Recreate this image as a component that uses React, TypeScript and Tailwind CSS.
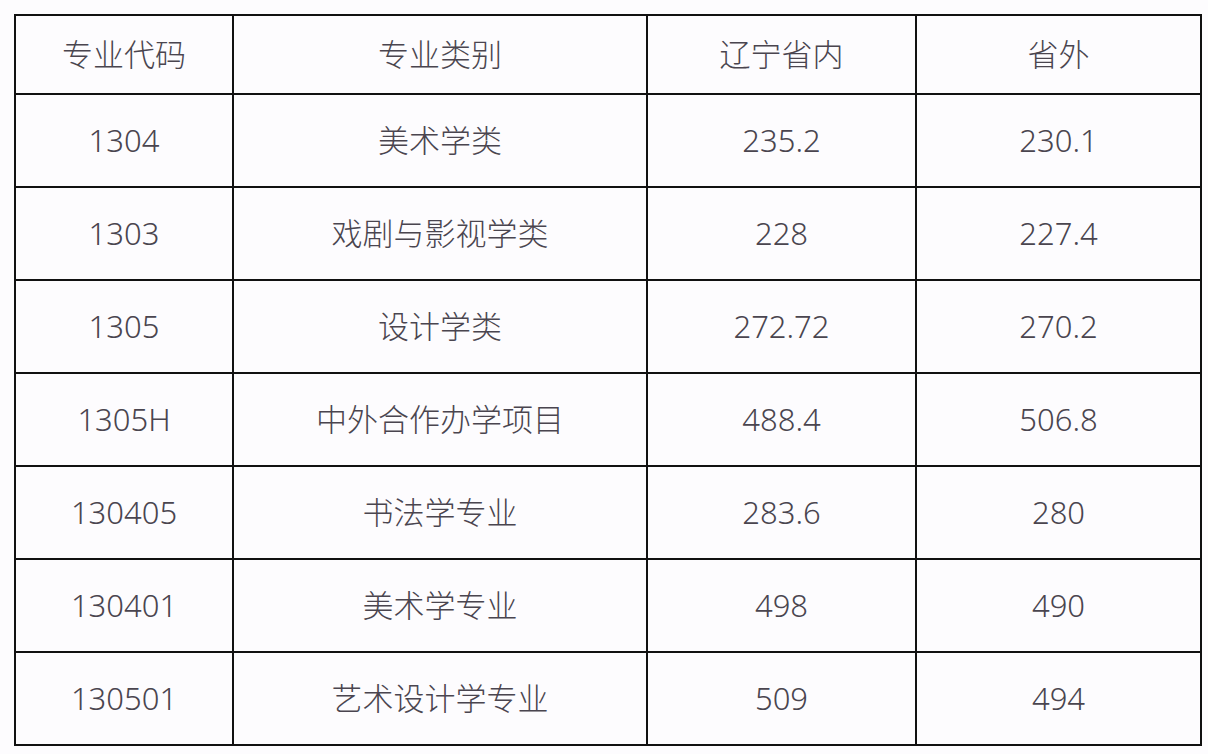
const rows = [
  ["1304", "美术学类", "235.2", "230.1"],
  ["1303", "戏剧与影视学类", "228", "227.4"],
  ["1305", "设计学类", "272.72", "270.2"],
  ["1305H", "中外合作办学项目", "488.4", "506.8"],
  ["130405", "书法学专业", "283.6", "280"],
  ["130401", "美术学专业", "498", "490"],
  ["130501", "艺术设计学专业", "509", "494"],
];

const cell = "border-2 border-[#111] text-center align-middle font-light";

export default function App() {
  return (
    <div
      className="w-[1208px] h-[754px] bg-[#fdfcfe] pt-[14px] pl-[14px] text-[31px] text-[#4a454f]"
      style={{ fontFamily: '"Noto Sans", "Noto Sans CJK SC", sans-serif' }}
    >
      <table className="border-collapse table-fixed w-[1186px]">
        <colgroup>
          <col className="w-[218px]" />
          <col className="w-[414px]" />
          <col className="w-[269px]" />
          <col className="w-[285px]" />
        </colgroup>
        <thead>
          <tr className="h-[79px]">
            <th className={cell}>专业代码</th>
            <th className={cell}>专业类别</th>
            <th className={cell}>辽宁省内</th>
            <th className={cell}>省外</th>
          </tr>
        </thead>
        <tbody>
          {rows.map((r) => (
            <tr key={r[0]} className="h-[93px]">
              {r.map((v, i) => (
                <td key={i} className={cell}>
                  {v}
                </td>
              ))}
            </tr>
          ))}
        </tbody>
      </table>
    </div>
  );
}
